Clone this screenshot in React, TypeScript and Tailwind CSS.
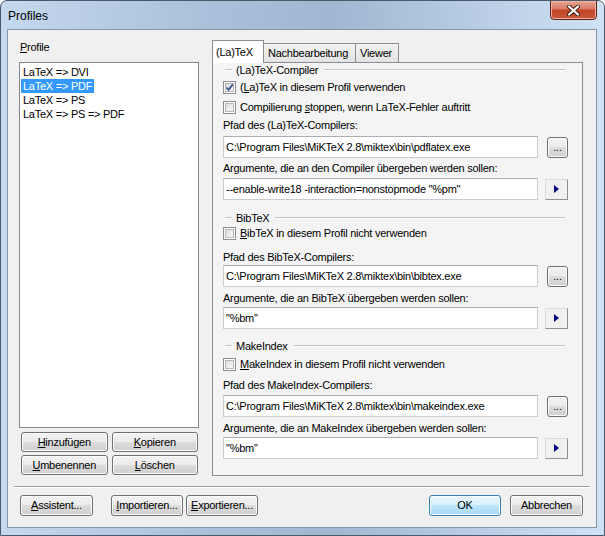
import React from "react";

const font = "font-['Liberation_Sans',Arial,sans-serif]";

const btnBase =
  "flex items-center justify-center rounded-[3px] border text-[11px] leading-none text-black";
const btnNormal =
  "border-[#707070] bg-[linear-gradient(to_bottom,#f2f2f2_0%,#ebebeb_49%,#dddddd_50%,#cfcfcf_100%)] shadow-[inset_0_0_0_1px_#fcfcfc]";
const btnDefault =
  "border-[#3c7fb1] bg-[linear-gradient(to_bottom,#eaf6fd_0%,#d9f0fc_49%,#bee6fd_50%,#a7d9f5_100%)] shadow-[inset_0_0_0_1px_#f4fbff]";

function Btn({
  children,
  className = "",
  def = false,
}: {
  children: React.ReactNode;
  className?: string;
  def?: boolean;
}) {
  return (
    <div className={`${btnBase} ${def ? btnDefault : btnNormal} ${className}`}>
      {children}
    </div>
  );
}

function U({ children }: { children: React.ReactNode }) {
  return <span className="underline underline-offset-[1px]">{children}</span>;
}

function Checkbox({ checked = false }: { checked?: boolean }) {
  return (
    <div className="relative h-[13px] w-[13px] shrink-0 border border-[#8e8f8f] bg-white p-[1px]">
      <div className="h-full w-full border border-[#b7b7b7] bg-[linear-gradient(135deg,#dcdcdc,#f9f9f9)]" />
      {checked && (
        <svg
          className="absolute left-[1px] top-[1px]"
          width="9"
          height="9"
          viewBox="0 0 9 9"
        >
          <path
            d="M1.5 4.5 L3.6 6.8 L7.8 1.4"
            fill="none"
            stroke="#3d5690"
            strokeWidth="1.8"
          />
        </svg>
      )}
    </div>
  );
}

function GroupHeader({ title }: { title: string }) {
  return (
    <div className="flex h-[14px] items-center pl-[2px] pr-[3px]">
      <div className="h-[2px] w-[7px] border-t border-b border-t-[#c3c3c3] border-b-white" />
      <span className="px-[4px] leading-none">{title}</span>
      <div className="ml-[2px] h-[2px] flex-1 border-t border-b border-t-[#c3c3c3] border-b-white" />
    </div>
  );
}

function Label({ children, mt }: { children: React.ReactNode; mt: string }) {
  return <div className={`flex h-[14px] items-center ${mt}`}>{children}</div>;
}

function Field({
  value,
  kind,
  mt,
}: {
  value: string;
  kind: "browse" | "arrow";
  mt: string;
}) {
  return (
    <div className={`flex h-[22px] items-center ${mt}`}>
      <div className="flex h-[22px] w-[315px] items-center border border-[#c9cdd3] border-t-[#abadb3] bg-white pl-[2px] whitespace-nowrap">
        {value}
      </div>
      {kind === "browse" ? (
        <Btn className="ml-[9px] h-[21px] w-[21px] items-end pb-[4px]">...</Btn>
      ) : (
        <div className="ml-[7px] flex h-[21px] w-[23px] items-center justify-center border border-[#dcdcdc] border-b-[#8f8f8f] border-r-[#8f8f8f] bg-[#f0f0f0]">
          <svg width="5" height="8" viewBox="0 0 5 8">
            <path d="M0 0 L5 4 L0 8 Z" fill="#000080" />
          </svg>
        </div>
      )}
    </div>
  );
}

function CheckRow({
  children,
  checked,
  h,
  mt = "",
}: {
  children: React.ReactNode;
  checked?: boolean;
  h: string;
  mt?: string;
}) {
  return (
    <div className={`flex items-center gap-[4px] ${h} ${mt}`}>
      <Checkbox checked={checked} />
      <span className="leading-none">{children}</span>
    </div>
  );
}

const profiles = [
  "LaTeX => DVI",
  "LaTeX => PDF",
  "LaTeX => PS",
  "LaTeX => PS => PDF",
];

export default function App() {
  return (
    <div
      className={`${font} relative h-[536px] w-[605px] overflow-hidden rounded-t-[7px] border border-[#4b5868] bg-[linear-gradient(90deg,#c4d8ee_0%,#a9c0da_35%,#9fb7d1_55%,#b9cee6_80%,#cfe1f4_100%)] text-[11px] tracking-[-0.25px] text-black`}
    >
      {/* title bar */}
      <div className="flex h-[28px] items-center pl-[7px] pt-[2px] text-[12px] tracking-normal">
        Profiles
      </div>
      <div className="absolute right-[7px] top-[-1px] flex h-[20px] w-[47px] items-center justify-center rounded-b-[4px] border border-[#5d2418] bg-[linear-gradient(to_bottom,#e8a595_0%,#d77a63_45%,#c24325_50%,#c9583a_100%)] shadow-[inset_0_0_0_1px_#eeb1a2]">
        <svg width="13" height="11" viewBox="0 0 13 11">
          <path
            d="M2 1.5 L11 9.5 M11 1.5 L2 9.5"
            stroke="#3b1a14"
            strokeWidth="4"
            strokeLinecap="round"
          />
          <path
            d="M2 1.5 L11 9.5 M11 1.5 L2 9.5"
            stroke="#ffffff"
            strokeWidth="2.2"
            strokeLinecap="round"
          />
        </svg>
      </div>

      {/* client area */}
      <div className="ml-[6px] h-[499px] w-[590px] border border-[#8696a9] bg-[#f0f0f0]">
        <div className="flex pl-[11px] pr-[13px] pt-[10px]">
          {/* left column */}
          <div className="flex w-[180px] flex-col">
            <div className="h-[22px] pl-[1px] leading-[14px]">
              <U>P</U>rofile
            </div>
            <div className="h-[366px] border border-[#828790] bg-white pl-[1px] pt-[2px]">
              {profiles.map((p, i) => (
                <div key={p} className="h-[14px] leading-[14px]">
                  <span
                    className={`inline-block px-[2px] ${
                      i === 1 ? "bg-[#3399ff] text-white" : ""
                    }`}
                  >
                    {p}
                  </span>
                </div>
              ))}
            </div>
            <div className="mt-[4px] grid grid-cols-2 gap-[4px] pl-[2px] pr-[1px]">
              <Btn className="h-[20px]">
                <U>H</U>inzufügen
              </Btn>
              <Btn className="h-[20px]">
                <U>K</U>opieren
              </Btn>
            </div>
            <div className="mt-[3px] grid grid-cols-2 gap-[4px] pl-[2px] pr-[1px]">
              <Btn className="h-[20px]">
                <U>U</U>mbenennen
              </Btn>
              <Btn className="h-[20px]">
                <U>L</U>öschen
              </Btn>
            </div>
          </div>

          {/* tab control */}
          <div className="ml-[13px] flex w-[371px] flex-col">
            <div className="flex h-[22px] items-end">
              <div className="relative z-10 -mb-[1px] flex h-[23px] w-[52px] items-center border border-b-0 border-[#898c95] bg-white pl-[3px]">
                (La)TeX
              </div>
              <div className="flex h-[19px] w-[92px] items-center border border-b-0 border-l-0 border-[#898c95] bg-[linear-gradient(to_bottom,#f2f2f2,#e3e3e3)] pl-[4px]">
                Nachbearbeitung
              </div>
              <div className="flex h-[19px] w-[43px] items-center border border-b-0 border-l-0 border-[#898c95] bg-[linear-gradient(to_bottom,#f2f2f2,#e3e3e3)] pl-[4px]">
                Viewer
              </div>
            </div>
            <div className="h-[414px] border border-[#898c95] bg-[#f4f4f4] pl-[10px] pr-[14px]">
              <GroupHeader title="(La)TeX-Compiler" />
              <CheckRow checked h="h-[20px]">
                (<U>L</U>a)TeX in diesem Profil verwenden
              </CheckRow>
              <CheckRow h="h-[20px]">
                Compilierung <U>s</U>toppen, wenn LaTeX-Fehler auftritt
              </CheckRow>
              <Label mt="mt-[1px]">Pfad des (La)TeX-Compilers:</Label>
              <Field
                mt="mt-[4px]"
                kind="browse"
                value="C:\Program Files\MiKTeX 2.8\miktex\bin\pdflatex.exe"
              />
              <Label mt="mt-[3px]">
                Argumente, die an den Compiler übergeben werden sollen:
              </Label>
              <Field
                mt="mt-[3px]"
                kind="arrow"
                value={'--enable-write18 -interaction=nonstopmode "%pm"'}
              />

              <div className="mt-[11px]">
                <GroupHeader title="BibTeX" />
              </div>
              <CheckRow h="h-[16px]">
                <U>B</U>ibTeX in diesem Profil nicht verwenden
              </CheckRow>
              <Label mt="mt-[9px]">Pfad des BibTeX-Compilers:</Label>
              <Field
                mt="mt-[1px]"
                kind="browse"
                value="C:\Program Files\MiKTeX 2.8\miktex\bin\bibtex.exe"
              />
              <Label mt="mt-[4px]">
                Argumente, die an BibTeX übergeben werden sollen:
              </Label>
              <Field mt="mt-[2px]" kind="arrow" value={'"%bm"'} />

              <div className="mt-[10px]">
                <GroupHeader title="MakeIndex" />
              </div>
              <CheckRow h="h-[16px]" mt="mt-[3px]">
                <U>M</U>akeIndex in diesem Profil nicht verwenden
              </CheckRow>
              <Label mt="mt-[6px]">Pfad des MakeIndex-Compilers:</Label>
              <Field
                mt="mt-[3px]"
                kind="browse"
                value="C:\Program Files\MiKTeX 2.8\miktex\bin\makeindex.exe"
              />
              <Label mt="mt-[4px]">
                Argumente, die an MakeIndex übergeben werden sollen:
              </Label>
              <Field mt="mt-[2px]" kind="arrow" value={'"%bm"'} />
            </div>
          </div>
        </div>

        {/* separator */}
        <div className="mx-[6px] mt-[10px] h-[2px] border-t border-b border-t-[#a0a0a0] border-b-white" />

        {/* bottom buttons */}
        <div className="mt-[7px] flex h-[21px] pl-[12px] pr-[13px]">
          <Btn className="w-[73px]">
            <U>A</U>ssistent...
          </Btn>
          <Btn className="ml-[18px] w-[72px]">
            <U>I</U>mportieren...
          </Btn>
          <Btn className="ml-[3px] w-[72px]">
            <U>E</U>xportieren...
          </Btn>
          <div className="flex-1" />
          <Btn def className="w-[72px]">
            OK
          </Btn>
          <Btn className="ml-[9px] w-[73px]">Abbrechen</Btn>
        </div>
      </div>
    </div>
  );
}
